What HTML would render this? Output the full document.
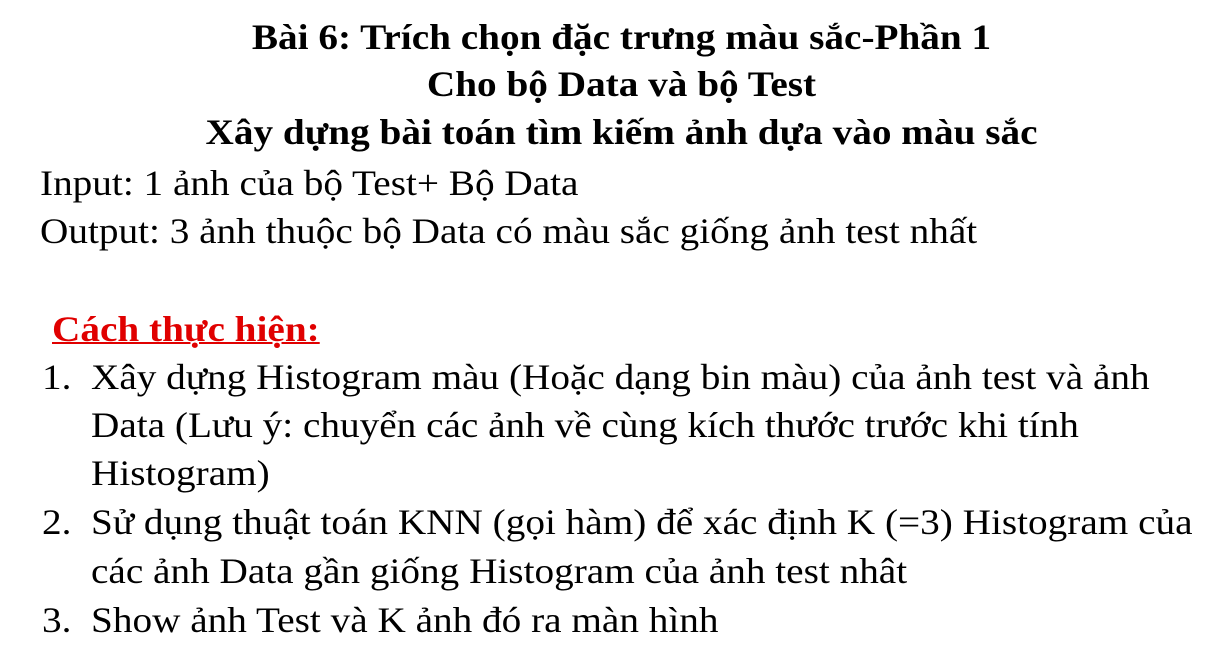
<!DOCTYPE html>
<html><head><meta charset="utf-8"><style>
html,body{margin:0;padding:0;background:#fff;}
body{width:1213px;height:649px;position:relative;overflow:hidden;font-family:"Liberation Serif","Times New Roman",serif;color:#000;}
.l{position:absolute;white-space:nowrap;line-height:48px;font-size:36px;transform:scaleX(1.09);transform-origin:left center;}
.t{font-weight:bold;left:0;width:1243px;text-align:center;transform-origin:center center;}
.r{color:#e00000;font-weight:bold;text-decoration:underline;text-decoration-thickness:2px;}
</style></head><body>
<div class="l t" style="top:13px">Bài 6: Trích chọn đặc trưng màu sắc-Phần 1</div>
<div class="l t" style="top:60px">Cho bộ Data và bộ Test</div>
<div class="l t" style="top:108px">Xây dựng bài toán tìm kiếm ảnh dựa vào màu sắc</div>
<div class="l" style="top:159px;left:40px">Input: 1 ảnh của bộ Test+ Bộ Data</div>
<div class="l" style="top:207px;left:40px">Output: 3 ảnh thuộc bộ Data có màu sắc giống ảnh test nhất</div>
<div class="l r" style="top:305px;left:52px">Cách thực hiện:</div>
<div class="l" style="top:353px;left:42px">1.</div>
<div class="l" style="top:353px;left:91px">Xây dựng Histogram màu (Hoặc dạng bin màu) của ảnh test và ảnh</div>
<div class="l" style="top:401px;left:91px">Data (Lưu ý: chuyển các ảnh về cùng kích thước trước khi tính</div>
<div class="l" style="top:449px;left:91px">Histogram)</div>
<div class="l" style="top:498px;left:42px">2.</div>
<div class="l" style="top:498px;left:91px">Sử dụng thuật toán KNN (gọi hàm) để xác định K (=3) Histogram của</div>
<div class="l" style="top:547px;left:91px">các ảnh Data gần giống Histogram của ảnh test nhât</div>
<div class="l" style="top:596px;left:42px">3.</div>
<div class="l" style="top:596px;left:91px">Show ảnh Test và K ảnh đó ra màn hình</div>
</body></html>
